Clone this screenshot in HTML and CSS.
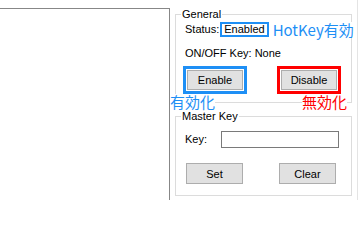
FILE: index.html
```html
<!DOCTYPE html>
<html lang="ja">
<head>
<meta charset="utf-8">
<title>HotKey</title>
<link rel="stylesheet" href="styles.css">
</head>
<body>
<div class="app">
  <div class="list"></div>
  <div class="side">
    <fieldset class="group general">
      <legend>General</legend>
      <div class="status-row">
        <span class="label">Status:</span>
        <span class="status-box">Enabled</span>
        <span class="note note-blue hotkey-note">HotKey有効</span>
      </div>
      <div class="text-row">ON/OFF Key: None</div>
      <div class="button-row toggle-row">
        <div class="mark">
          <button class="btn btn-toggle ring-blue">Enable</button>
          <span class="note note-blue note-enable">有効化</span>
        </div>
        <div class="mark">
          <button class="btn btn-toggle ring-red">Disable</button>
          <span class="note note-red note-disable">無効化</span>
        </div>
      </div>
    </fieldset>
    <fieldset class="group master">
      <legend>Master Key</legend>
      <div class="key-row">
        <span class="key-label">Key:</span>
        <input class="key-input" type="text">
      </div>
      <div class="button-row action-row">
        <button class="btn btn-action">Set</button>
        <button class="btn btn-action">Clear</button>
      </div>
    </fieldset>
  </div>
  <div class="edge"></div>
</div>
</body>
</html>
```

FILE: styles.css
```css
html, body {
  margin: 0;
  padding: 0;
  background: #ffffff;
}

body {
  font-family: "Liberation Sans", Arial, "Noto Sans CJK JP", sans-serif;
  font-size: 11px;
  line-height: 13px;
  color: #000000;
}

.app {
  display: flex;
  width: 360px;
  height: 200px;
  overflow: hidden;
}

.list {
  flex: none;
  width: 169px;
  margin-top: 8px;
  border-top: 1px solid #878787;
  border-right: 1px solid #878787;
  background: #ffffff;
}

.side {
  flex: none;
  width: 177px;
  margin-left: 5px;
  padding-top: 8px;
  display: flex;
  flex-direction: column;
}

.edge {
  flex: none;
  margin-left: 5px;
  border-left: 1px solid #e4e4e4;
}

.group {
  margin: 0;
  padding: 0;
  border: 1px solid #dcdcdc;
  min-width: 0;
}

.group legend {
  margin-left: 5px;
  padding: 0 1px;
  line-height: 13px;
  font-size: 11px;
}

.general {
  padding-bottom: 12px;
}

.master {
  margin-top: 7px;
  padding-bottom: 11px;
}

.status-row {
  display: flex;
  align-items: center;
  height: 15px;
  margin-top: 1px;
  margin-left: 9px;
  white-space: nowrap;
}

.status-box {
  box-sizing: border-box;
  height: 15px;
  margin-left: 1px;
  padding: 0 2px;
  border: 2px solid #1e8ff5;
  line-height: 11px;
  background: #ffffff;
}

.note {
  font-family: "Noto Sans CJK JP", "Liberation Sans", sans-serif;
  font-size: 15px;
  line-height: 15px;
  background: #ffffff;
  white-space: nowrap;
}

.note-blue {
  color: #1e8ff5;
}

.note-red {
  color: #ff0000;
}

.hotkey-note {
  margin-left: 4px;
  position: relative;
}

.text-row {
  margin-top: 10px;
  margin-left: 9px;
}

.button-row {
  display: flex;
}

.toggle-row {
  margin-top: 10px;
  margin-left: 11px;
  gap: 38px;
}

.mark {
  position: relative;
}

.btn {
  box-sizing: border-box;
  margin: 0;
  padding: 0;
  border: 1px solid #adadad;
  background: #e1e1e1;
  font-family: "Liberation Sans", Arial, sans-serif;
  font-size: 11px;
  color: #000000;
  display: block;
}

.btn-toggle {
  width: 56px;
  height: 20px;
}

.ring-blue {
  outline: 3px solid #1e8ff5;
  outline-offset: 1px;
}

.ring-red {
  outline: 3px solid #ff0000;
  outline-offset: 1px;
}

.note-enable {
  position: absolute;
  top: 24px;
  left: -17px;
}

.note-disable {
  position: absolute;
  top: 24px;
  left: 21px;
}

.key-row {
  display: flex;
  align-items: center;
  margin-top: 8px;
  margin-left: 9px;
}

.key-label {
  width: 36px;
}

.key-input {
  box-sizing: border-box;
  width: 118px;
  height: 17px;
  margin: 0;
  padding: 0 2px;
  border: 1px solid #7a7a7a;
  background: #ffffff;
  font-family: "Liberation Sans", Arial, sans-serif;
  font-size: 11px;
  outline: none;
}

.action-row {
  margin-top: 15px;
  margin-left: 10px;
  gap: 36px;
}

.btn-action {
  width: 57px;
  height: 21px;
}
```
